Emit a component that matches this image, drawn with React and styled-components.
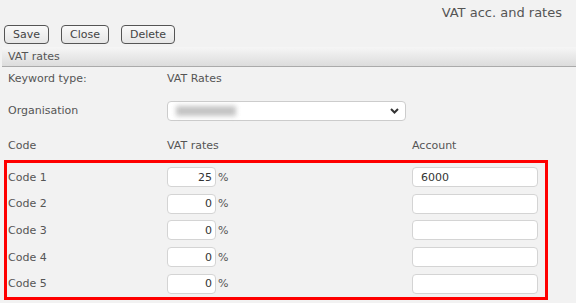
import React from "react";
import styled, { createGlobalStyle } from "styled-components";

const GlobalStyle = createGlobalStyle`
    html, body {
        margin: 0;
        padding: 0;
        background: #f2f2f2;
    }
    body {
        font-family: Tahoma, "DejaVu Sans", Verdana, sans-serif;
        font-size: 11px;
        color: #555;
    }
`;

const Page = styled.div`
    width: 576px;
    height: 303px;
    overflow: hidden;
    display: flex;
    flex-direction: column;
`;

const TitleBar = styled.div`
    height: 25px;
    display: flex;
    align-items: center;
    justify-content: flex-end;
    padding-right: 14px;
    font-size: 13px;
    color: #555;
`;

const Toolbar = styled.div`
    display: flex;
    gap: 12px;
    padding: 0 4px;
    height: 19px;
`;

const Button = styled.button`
    font: inherit;
    color: #444;
    height: 19px;
    padding: 0 8px;
    border: 1px solid #555;
    border-radius: 4px;
    background: linear-gradient(#fafafa, #e6e6e6);
`;

const SectionHeader = styled.div`
    margin: 3px 0 0 2px;
    height: 19px;
    padding-left: 6px;
    display: flex;
    align-items: center;
    background: linear-gradient(#f6f6f6, #dcdcdc);
    border-bottom: 1px solid #aaa;
`;

const Body = styled.div`
    padding: 1px 8px 0 8px;
`;

const Grid = styled.div`
    display: grid;
    grid-template-columns: 159px 245px 1fr;
    align-items: center;
`;

const Cell = styled.div`
    height: ${(p) => p.$h || 20}px;
    display: flex;
    align-items: center;
`;

const Select = styled.div`
    width: 239px;
    height: 20px;
    box-sizing: border-box;
    border: 1px solid #ccc;
    border-radius: 4px;
    background: #fff;
    display: flex;
    align-items: center;
    justify-content: space-between;
    padding: 0 6px 0 8px;
`;

const Blur = styled.div`
    width: 60px;
    height: 10px;
    background: #c4c4c4;
    filter: blur(2.5px);
`;

const Highlight = styled.div`
    margin: 3px -4px 0 -4px;
    width: 544px;
    box-sizing: border-box;
    border: 3px solid #f00;
    padding: 4px 1px 3px 1px;
`;

const Rows = styled.div`
    display: grid;
    grid-template-columns: 159px 245px 1fr;
    row-gap: 6.7px;
    align-items: center;
`;

const Input = styled.input`
    font: inherit;
    color: #333;
    box-sizing: border-box;
    height: 20px;
    width: ${(p) => p.$w}px;
    border: 1px solid #d4d4d4;
    border-radius: 4px;
    background: #fff;
    text-align: ${(p) => p.$align || "left"};
    padding: 0 ${(p) => (p.$align === "right" ? 3 : 8)}px;
    outline: none;
`;

const Percent = styled.span`
    margin-left: 2px;
`;

const rates = [
    { code: "Code 1", rate: "25", account: "6000" },
    { code: "Code 2", rate: "0", account: "" },
    { code: "Code 3", rate: "0", account: "" },
    { code: "Code 4", rate: "0", account: "" },
    { code: "Code 5", rate: "0", account: "" },
];

const Chevron = () => (
    <svg width="9" height="6" viewBox="0 0 9 6">
        <path d="M1 1 L4.5 4.5 L8 1" fill="none" stroke="#333" strokeWidth="2" />
    </svg>
);

const App = () => {
    return (
        <Page>
            <GlobalStyle />
            <TitleBar>VAT acc. and rates</TitleBar>
            <Toolbar>
                <Button>Save</Button>
                <Button>Close</Button>
                <Button>Delete</Button>
            </Toolbar>
            <SectionHeader>VAT rates</SectionHeader>
            <Body>
                <Grid>
                    <Cell $h={20}>Keyword type:</Cell>
                    <Cell $h={20}>VAT Rates</Cell>
                    <Cell $h={20} />
                    <Cell $h={45}>Organisation</Cell>
                    <Cell $h={45}>
                        <Select>
                            <Blur />
                            <Chevron />
                        </Select>
                    </Cell>
                    <Cell $h={45} />
                    <Cell $h={24}>Code</Cell>
                    <Cell $h={24}>VAT rates</Cell>
                    <Cell $h={24}>Account</Cell>
                </Grid>
                <Highlight>
                    <Rows>
                        {rates.map((r) => (
                            <React.Fragment key={r.code}>
                                <Cell>{r.code}</Cell>
                                <Cell>
                                    <Input $w={49} $align="right" defaultValue={r.rate} />
                                    <Percent>%</Percent>
                                </Cell>
                                <Cell>
                                    <Input $w={126} defaultValue={r.account} />
                                </Cell>
                            </React.Fragment>
                        ))}
                    </Rows>
                </Highlight>
            </Body>
        </Page>
    );
};

export default App;
